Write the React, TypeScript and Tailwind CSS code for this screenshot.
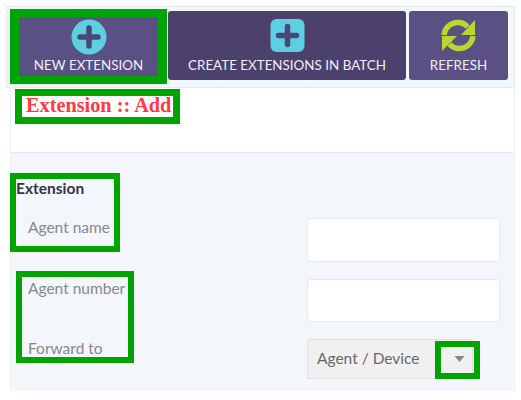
import React from 'react';

// Green marker boxes drawn over the screenshot
const Marker = ({ className }: { className: string }) => (
  <div className={`absolute border-solid border-[#00a400] ${className}`} />
);

const PlusCircle = () => (
  <svg width="36" height="36" viewBox="0 0 36 36">
    <circle cx="18" cy="18" r="17.5" fill="#5ccfe0" />
    <path d="M18 9v18M9 18h18" stroke="#4b4876" strokeWidth="5.500" strokeLinecap="round" />
  </svg>
);

const PlusSquare = () => (
  <svg width="35" height="33" viewBox="0 0 35 33">
    <rect x="0.5" y="0" width="34" height="33" rx="6" fill="#5ccfe0" />
    <path d="M17.5 7.500v18M8.500 16.500h18" stroke="#4b4876" strokeWidth="5.500" strokeLinecap="round" />
  </svg>
);

const RefreshIcon = () => (
  <svg width="35" height="33" viewBox="0 0 35 33">
    <g fill="none" stroke="#bdd62f" strokeWidth="5.500">
      <path d="M3 16C4 8 10 3.500 17 3.500c4 0 7 1.500 9.500 4.500" />
      <path d="M32 17c-1 8-7 12.500-14 12.500-4 0-7-1.500-9.500-4.500" />
    </g>
    <path d="M34 1v15H20z" fill="#bdd62f" />
    <path d="M1 32V17h15z" fill="#bdd62f" />
  </svg>
);

const ToolbarButton = ({
  label,
  icon,
  className,
}: {
  label: string;
  icon: React.ReactNode;
  className: string;
}) => (
  <button
    className={`flex h-[69px] flex-col items-center rounded-[3px] pt-[8px] text-[13.400px] leading-[16px] text-[#f0eef5] ${className}`}
  >
    <span className="flex h-[38px] items-start">{icon}</span>
    <span className="uppercase">{label}</span>
  </button>
);

const FormRow = ({ label, children, className }: { label: string; children: React.ReactNode; className: string }) => (
  <div className={`flex items-start ${className}`}>
    <label className="w-[296px] pl-[17px] text-[15.500px] leading-[18px] text-[#86888d]">{label}</label>
    {children}
  </div>
);

const App = () => {
  return (
    <div className="relative h-[400px] w-[521px] overflow-hidden bg-white pt-[6px] font-['Lato',sans-serif]">
      <div className="ml-[6px] flex h-[82px] w-[509px] border border-[#e4ebee] bg-[#f0f8fb] pl-[3px] pt-[4px]">
        <ToolbarButton label="New Extension" icon={<PlusCircle />} className="w-[157px] bg-[#5a5084]" />
        <ToolbarButton label="Create Extensions in Batch" icon={<PlusSquare />} className="ml-[1px] w-[238px] bg-[#4c416c]" />
        <ToolbarButton label="Refresh" icon={<RefreshIcon />} className="ml-[3px] w-[99px] bg-[#5a5084]" />
      </div>

      <div className="ml-[10px] h-[303px] w-[505px] border-l border-r border-[#eef1f4]">
        <div className="h-[64px] bg-white pl-[15px] pt-[6px]">
          <h1 className="font-['Liberation_Serif',serif] text-[20.300px] font-bold leading-[22px] text-[#ff3a45]">
            Extension :: Add
          </h1>
        </div>

        <div className="h-[239px] border-t border-[#e5eaf0] bg-[#f3f6fa]">
          <div className="pl-[5px] pt-[26px] text-[15.500px] font-bold leading-[18px] text-[#33344d]">Extension</div>
          <FormRow label="Agent name" className="mt-[21px]">
            <input className="h-[44px] w-[193px] rounded-[3px] border border-[#e6e8ea] bg-white" />
          </FormRow>
          <FormRow label="Agent number" className="mt-[17px]">
            <input className="h-[43px] w-[193px] rounded-[3px] border border-[#e6e8ea] bg-white" />
          </FormRow>
          <FormRow label="Forward to" className="mt-[17px]">
            <div className="flex h-[40px] w-[166px] items-center justify-between rounded-[2px] border border-[#dfe0e2] bg-[#f0f0f0] pl-[9px] pr-[7px] text-[15.500px] text-[#66686d]">
              <span>Agent / Device</span>
              <svg width="11" height="6" viewBox="0 0 11 6">
                <path d="M0.500 0h10L5.500 6z" fill="#85878c" />
              </svg>
            </div>
          </FormRow>
        </div>
      </div>

      <Marker className="left-[10px] top-[9px] h-[75px] w-[157px] border-[8px] border-x-[9px]" />
      <Marker className="left-[15px] top-[89px] h-[35px] w-[165px] border-[7px]" />
      <Marker className="left-[10px] top-[173px] h-[79px] w-[110px] border-[6.500px]" />
      <Marker className="left-[16px] top-[271px] h-[92px] w-[118px] border-[6.500px]" />
      <Marker className="left-[435px] top-[341px] h-[38px] w-[45px] border-[6.500px]" />
    </div>
  );
};

export default App;
